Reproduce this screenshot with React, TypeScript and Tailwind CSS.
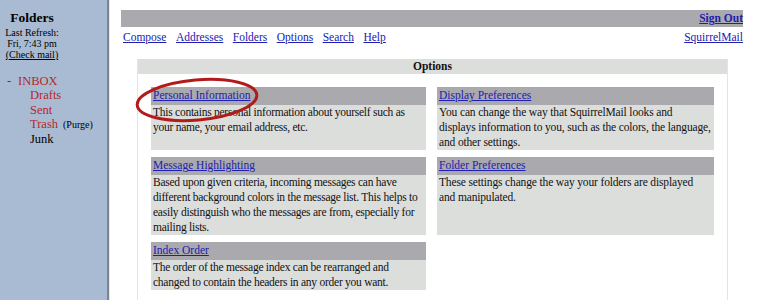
import React from 'react';

const serif = "font-['Liberation_Serif','Times_New_Roman',serif]";
const link = 'text-[#2020b0] underline';

// right-hand column keeps the reference's fixed line breaks
const options = [
  {
    title: 'Personal Information',
    lines: ['This contains personal information about yourself such as your name, your email address, etc.'],
  },
  {
    title: 'Display Preferences',
    lines: [
      'You can change the way that SquirrelMail looks and',
      'displays information to you, such as the colors, the language,',
      'and other settings.',
    ],
  },
  {
    title: 'Message Highlighting',
    lines: [
      'Based upon given criteria, incoming messages can have different background colors in the message list. This helps to easily distinguish who the messages are from, especially for mailing lists.',
    ],
  },
  {
    title: 'Folder Preferences',
    lines: ['These settings change the way your folders are displayed', 'and manipulated.'],
  },
  {
    title: 'Index Order',
    lines: ['The order of the message index can be rearranged and changed to contain the headers in any order you want.'],
  },
];

const Sidebar = () => (
  <div className="w-[109px] shrink-0 bg-[#a9bbd2] border-r-2 border-[#7d848c] text-black">
    <div className="pt-[10px] w-[64px] text-center">
      <div className="text-[13.5px] font-bold leading-[16px]">Folders</div>
      <div className="text-[10px] leading-[11px] mt-[1px]">Last Refresh:</div>
      <div className="text-[10px] leading-[11px]">Fri, 7:43 pm</div>
      <div className="text-[10px] leading-[11px] underline">(Check mail)</div>
    </div>
    <div className="mt-[14px] text-[12.5px] leading-[14.3px]">
      <div className="flex">
        <span className="w-[18px] pl-[7px] text-[#444]">-</span>
        <span className="text-[#b5272b]">INBOX</span>
      </div>
      <div className="pl-[30px] text-[#b5272b]">Drafts</div>
      <div className="pl-[30px] text-[#b5272b]">Sent</div>
      <div className="pl-[30px] flex items-baseline">
        <span className="text-[#b5272b]">Trash</span>
        <span className="ml-[5px] text-[10px]">(Purge)</span>
      </div>
      <div className="pl-[30px]">Junk</div>
    </div>
  </div>
);

const OptionCell = ({ title, lines }: { title: string; lines: string[] }) => (
  <div className="flex flex-col">
    <div className="h-[18px] bg-[#aaa9ad] flex items-center px-[2px]">
      <span className={link}>{title}</span>
    </div>
    <div className="flex-1 bg-[#dcdedc] px-[2px] leading-[15px] tracking-[-0.25px]">
      {lines.length === 1 ? (
        lines[0]
      ) : (
        lines.map((l) => (
          <div key={l} className="whitespace-nowrap tracking-[-0.15px]">
            {l}
          </div>
        ))
      )}
    </div>
  </div>
);

export default function App() {
  return (
    <div className={`relative flex w-[758px] h-[300px] overflow-hidden bg-white text-[11.5px] text-[#111] ${serif}`}>
      <Sidebar />
      <div className="flex-1 border-l border-[#e6e6e6] pl-[11px] pr-[15px] pt-[10px]">
        {/* top bar */}
        <div className="h-[17px] bg-[#aaa9ad] flex items-center justify-end">
          <span className={`${link} font-bold`}>Sign Out</span>
        </div>
        <div className="flex justify-between pl-[2px] leading-[18px] mt-[1px]">
          <div className="flex gap-[9.5px]">
            <span className={link}>Compose</span>
            <span className={link}>Addresses</span>
            <span className={link}>Folders</span>
            <span className={link}>Options</span>
            <span className={link}>Search</span>
            <span className={link}>Help</span>
          </div>
          <span className={link}>SquirrelMail</span>
        </div>

        {/* options table */}
        <div className="ml-[16px] mr-[15px] mt-[13px] border border-[#e4e4e4] border-t-0">
          <div className="h-[15px] bg-[#dcdedc] flex items-center justify-center font-bold">Options</div>
          <div className="grid grid-cols-[275px_277px] gap-x-[11px] gap-y-[7px] pl-[13px] pt-[13px] pb-[10px]">
            {options.map((o) => (
              <OptionCell key={o.title} title={o.title} lines={o.lines} />
            ))}
          </div>
        </div>
      </div>

      {/* red annotation circle */}
      <svg className="absolute left-0 top-0 pointer-events-none" width="758" height="300">
        <ellipse cx="197" cy="100" rx="60" ry="20" fill="none" stroke="#b31b1b" strokeWidth="3" transform="rotate(-5 197 100)" />
      </svg>
    </div>
  );
}
